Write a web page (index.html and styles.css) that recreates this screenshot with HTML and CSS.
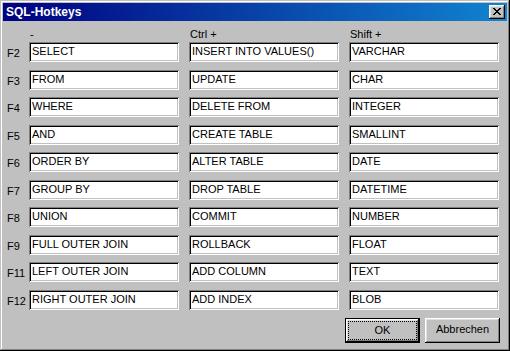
FILE: index.html
```html
<!DOCTYPE html>
<html>
<head>
<meta charset="utf-8">
<title>SQL-Hotkeys</title>
<link rel="stylesheet" href="styles.css">
</head>
<body>
<div class="window">
  <div class="titlebar">
    <span class="title">SQL-Hotkeys</span>
    <div class="close">
      <svg class="xglyph" width="8" height="7" viewBox="0 0 8 7" shape-rendering="crispEdges">
        <path d="M0 0h2v1h-2zM6 0h2v1h-2zM1 1h2v1h-2zM5 1h2v1h-2zM2 2h4v1h-4zM3 3h2v1h-2zM2 4h4v1h-4zM1 5h2v1h-2zM5 5h2v1h-2zM0 6h2v1h-2zM6 6h2v1h-2z" fill="#000"/>
      </svg>
    </div>
  </div>
  <div class="content">
    <div class="grid header">
      <span></span>
      <span class="colhead">-</span>
      <span class="colhead">Ctrl +</span>
      <span class="colhead">Shift +</span>
    </div>
    <div class="rows">
      <div class="grid row"><span class="key">F2</span><div class="field">SELECT</div><div class="field">INSERT INTO VALUES()</div><div class="field">VARCHAR</div></div>
      <div class="grid row"><span class="key">F3</span><div class="field">FROM</div><div class="field">UPDATE</div><div class="field">CHAR</div></div>
      <div class="grid row"><span class="key">F4</span><div class="field">WHERE</div><div class="field">DELETE FROM</div><div class="field">INTEGER</div></div>
      <div class="grid row"><span class="key">F5</span><div class="field">AND</div><div class="field">CREATE TABLE</div><div class="field">SMALLINT</div></div>
      <div class="grid row"><span class="key">F6</span><div class="field">ORDER BY</div><div class="field">ALTER TABLE</div><div class="field">DATE</div></div>
      <div class="grid row"><span class="key">F7</span><div class="field">GROUP BY</div><div class="field">DROP TABLE</div><div class="field">DATETIME</div></div>
      <div class="grid row"><span class="key">F8</span><div class="field">UNION</div><div class="field">COMMIT</div><div class="field">NUMBER</div></div>
      <div class="grid row"><span class="key">F9</span><div class="field">FULL OUTER JOIN</div><div class="field">ROLLBACK</div><div class="field">FLOAT</div></div>
      <div class="grid row"><span class="key">F11</span><div class="field">LEFT OUTER JOIN</div><div class="field">ADD COLUMN</div><div class="field">TEXT</div></div>
      <div class="grid row"><span class="key">F12</span><div class="field">RIGHT OUTER JOIN</div><div class="field">ADD INDEX</div><div class="field">BLOB</div></div>
    </div>
    <div class="buttons">
      <div class="btn default"><span class="focus">OK</span></div>
      <div class="btn">Abbrechen</div>
    </div>
  </div>
</div>
</body>
</html>
```
FILE: styles.css
```css
* { box-sizing: border-box; }
html, body { margin: 0; padding: 0; background: #c0c0c0; }
body {
  font-family: "Liberation Sans", Arial, sans-serif;
  font-size: 11px;
  color: #000;
}
.window {
  width: 510px;
  height: 351px;
  background: #c0c0c0;
  padding: 3px;
  box-shadow: inset -1px -1px #000, inset 1px 1px #c0c0c0, inset -2px -2px #808080, inset 2px 2px #fff;
  display: flex;
  flex-direction: column;
}
.titlebar {
  height: 18px;
  background: linear-gradient(to right, #000080, #1084d0);
  display: flex;
  align-items: flex-start;
  justify-content: space-between;
  padding-left: 3px;
}
.title {
  color: #fff;
  font-weight: bold;
  font-size: 12px;
  line-height: 18px;
}
.close {
  width: 16px;
  height: 14px;
  margin-top: 2px;
  margin-right: 2px;
  background: #c0c0c0;
  box-shadow: inset -1px -1px #000, inset 1px 1px #fff, inset -2px -2px #808080, inset 2px 2px #dfdfdf;
  padding: 3px 0 0 4px;
}
.xglyph { display: block; }
.content {
  flex: 1;
  padding: 0 7px 0 0;
  display: flex;
  flex-direction: column;
}
.grid {
  display: grid;
  grid-template-columns: 16px 150px 150px 150px;
  column-gap: 10px;
}
.header {
  height: 21px;
  padding-top: 7px;
  line-height: 13px;
}
.colhead { padding-left: 1px; }
.rows { display: flex; flex-direction: column; }
.row { height: 20px; }
.row:nth-child(even) { margin-top: 8px; }
.row:nth-child(odd):not(:first-child) { margin-top: 7px; }
.key {
  padding-left: 4px;
  padding-top: 1px;
  line-height: 20px;
  white-space: nowrap;
}
.field {
  background: #fff;
  height: 20px;
  padding: 2px 2px 3px 3px;
  line-height: 15px;
  white-space: nowrap;
  overflow: hidden;
  box-shadow: inset 1px 1px #808080, inset -1px -1px #fff, inset 2px 2px #000, inset -2px -2px #c0c0c0;
}
.buttons {
  display: flex;
  justify-content: flex-end;
  gap: 5px;
  margin-top: 8px;
}
.btn {
  width: 75px;
  height: 25px;
  line-height: 23px;
  padding-bottom: 2px;
  text-align: center;
  background: #c0c0c0;
  box-shadow: inset -1px -1px #000, inset 1px 1px #fff, inset -2px -2px #808080, inset 2px 2px #dfdfdf;
}
.btn.default {
  border: 1px solid #000;
  padding: 3px;
  line-height: 17px;
}
.focus {
  display: block;
  height: 17px;
  outline: 1px dotted #000;
  outline-offset: 0;
}
```
